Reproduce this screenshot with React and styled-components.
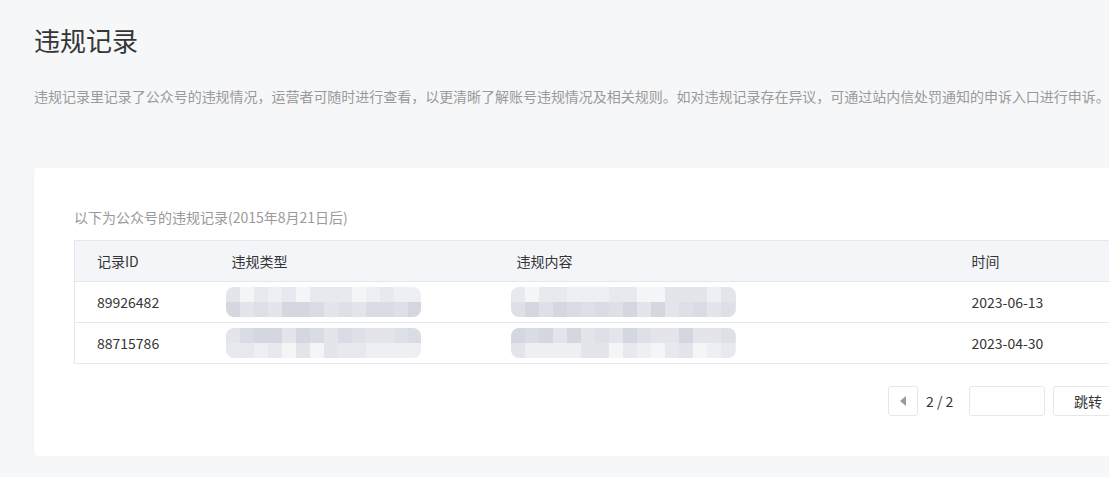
import React from 'react'
import styled, {createGlobalStyle} from 'styled-components'

const GlobalStyle = createGlobalStyle`
  html, body {
    margin: 0;
    padding: 0;
    overflow: hidden;
    background: #f6f7f9;
  }
  body {
    font-family: "Noto Sans CJK SC", "Liberation Sans", sans-serif;
    color: #353535;
  }
`

const records = [
    {id: '89926482', time: '2023-06-13', seed: 3, light: 'top'},
    {id: '88715786', time: '2023-04-30', seed: 11, light: 'bottom'},
]

const shades = ['#d4d7e0', '#d9dce4', '#dee0e7', '#e3e5eb', '#e8e9ee', '#eeeff2', '#f4f5f7', '#fafbfc']

const Mosaic = ({width, seed, light}) => {
    const cols = Math.ceil(width / 14)
    let s = seed * 9301 + 49297
    const rnd = () => {
        s = (s * 9301 + 49297) % 233280
        return s / 233280
    }
    const rects = []
    for (let r = 0; r < 2; r++) {
        for (let c = 0; c < cols; c++) {
            const isLight = (light === 'top' && r === 0) || (light === 'bottom' && r === 1)
            const base = isLight ? 3 : 0
            const idx = Math.min(shades.length - 1, base + Math.floor(rnd() * 4))
            rects.push(<rect key={r + '-' + c} x={c * 14} y={r * 15} width={14} height={15} fill={shades[idx]}/>)
        }
    }
    return (
        <svg width={width} height={30} viewBox={`0 0 ${width} 30`}>
            <defs>
                <clipPath id={'m' + seed + width}>
                    <rect x="0" y="0" width={width} height="30" rx="8"/>
                </clipPath>
            </defs>
            <g clipPath={`url(#m${seed}${width})`}>{rects}</g>
        </svg>
    )
}

const App = () => {
    return (
        <Page>
            <GlobalStyle/>
            <Title>违规记录</Title>
            <Desc>违规记录里记录了公众号的违规情况，运营者可随时进行查看，以更清晰了解账号违规情况及相关规则。如对违规记录存在异议，可通过站内信处罚通知的申诉入口进行申诉。</Desc>
            <Card>
                <Label>以下为公众号的违规记录(2015年8月21日后)</Label>
                <Table>
                    <colgroup>
                        <col width="135"/>
                        <col width="285"/>
                        <col width="455"/>
                        <col/>
                    </colgroup>
                    <thead>
                    <tr>
                        <Th>记录ID</Th>
                        <Th>违规类型</Th>
                        <Th>违规内容</Th>
                        <Th>时间</Th>
                    </tr>
                    </thead>
                    <tbody>
                    {records.map((item) => (
                        <tr key={item.id}>
                            <Td>{item.id}</Td>
                            <Td><Blur><Mosaic width={195} seed={item.seed} light={item.light}/></Blur></Td>
                            <Td><Blur><Mosaic width={225} seed={item.seed + 5} light={item.light}/></Blur></Td>
                            <Td>{item.time}</Td>
                        </tr>
                    ))}
                    </tbody>
                </Table>
                <Pager>
                    <PrevBtn>
                        <svg width="6" height="10" viewBox="0 0 6 10">
                            <path d="M6 0 L0 5 L6 10 Z" fill="#9a9a9a"/>
                        </svg>
                    </PrevBtn>
                    <PageNum>2 / 2</PageNum>
                    <PageInput/>
                    <JumpBtn>跳转</JumpBtn>
                </Pager>
            </Card>
        </Page>
    )
}

const Page = styled.div`
  width: 1200px;
  padding: 22px 0 0 34px;
`

const Title = styled.h2`
  margin: 0;
  font-size: 26px;
  font-weight: 400;
  line-height: 36px;
  color: #353535;
`

const Desc = styled.p`
  margin: 28px 0 0;
  font-size: 14px;
  line-height: 20px;
  color: #9a9a9a;
  letter-spacing: -0.03px;
  white-space: nowrap;
`

const Card = styled.div`
  margin-top: 62px;
  width: 1160px;
  background: #fff;
  border-radius: 3px;
  box-shadow: 0 1px 2px rgba(150, 150, 150, 0.15);
  padding: 39px 40px 40px;
  box-sizing: border-box;
`

const Label = styled.div`
  font-size: 14px;
  line-height: 20px;
  color: #9a9a9a;
`

const Table = styled.table`
  margin-top: 13px;
  width: 100%;
  border-collapse: collapse;
  table-layout: fixed;
  font-size: 14px;
  border: 1px solid #e4e8eb;
`

const Th = styled.th`
  height: 40px;
  background: #f4f5f9;
  font-weight: 400;
  text-align: left;
  padding: 0 0 0 22px;
  color: #353535;
  border-bottom: 1px solid #e4e8eb;
`

const Td = styled.td`
  height: 40px;
  padding: 0 0 0 22px;
  color: #353535;
  border-bottom: 1px solid #e4e8eb;
  vertical-align: middle;
`

const Blur = styled.div`
  display: flex;
  margin-left: -6px;
  height: 30px;
  filter: blur(0.4px);
`

const Pager = styled.div`
  margin-top: 22px;
  display: flex;
  align-items: center;
  justify-content: flex-start;
  padding-left: 814px;
`

const PrevBtn = styled.div`
  width: 28px;
  height: 28px;
  border: 1px solid #e4e8eb;
  border-radius: 3px;
  display: flex;
  align-items: center;
  justify-content: center;
  background: #fff;
`

const PageNum = styled.span`
  margin-left: 8px;
  font-size: 14px;
  color: #353535;
  width: 43px;
`

const PageInput = styled.input`
  width: 74px;
  height: 28px;
  border: 1px solid #e4e8eb;
  border-radius: 3px;
  padding: 0;
  box-sizing: content-box;
  outline: none;
`

const JumpBtn = styled.button`
  margin-left: 8px;
  height: 30px;
  width: 80px;
  border: 1px solid #e4e8eb;
  border-radius: 3px;
  background: #fff;
  font-family: "Noto Sans CJK SC", sans-serif;
  font-size: 14px;
  color: #353535;
  text-align: left;
  padding-left: 20px;
`

export default App
